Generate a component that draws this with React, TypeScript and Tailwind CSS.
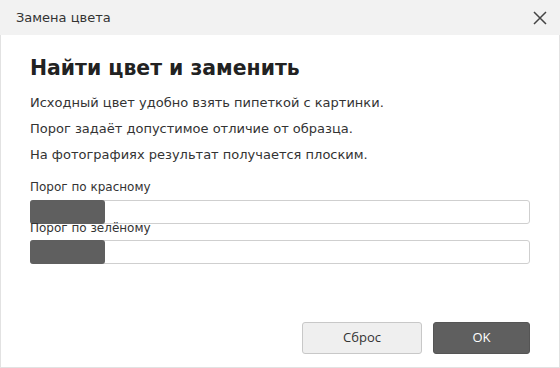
import React from "react";

const sliders = [
  { label: "Порог по красному", value: 75 },
  { label: "Порог по зелёному", value: 75 },
];

export default function App() {
  return (
    <div className="w-[560px] h-[368px] flex flex-col bg-white font-['DejaVu_Sans',sans-serif]">
      {/* Title bar */}
      <div className="h-[35px] shrink-0 flex items-center justify-between bg-[#f2f2f2] pl-4 pr-[13px]">
        <span className="text-[13px] text-[#333]">Замена цвета</span>
        <button className="w-[14px] h-[14px] flex items-center justify-center text-[#444]">
          <svg width="14" height="14" viewBox="0 0 14 14" fill="none" stroke="currentColor" strokeWidth="1.5">
            <path d="M1 1 L13 13 M13 1 L1 13" />
          </svg>
        </button>
      </div>

      {/* Body */}
      <div className="flex-1 flex flex-col border-x border-b border-[#e2e2e2] pl-[29px] pr-[29px] pb-[13px]">
        <h1 className="pt-[19px] text-[20.4px] leading-[28px] font-bold text-[#222]">Найти цвет и заменить</h1>
        <div className="mt-2 text-[13px] leading-[26px] text-[#333]">
          <p>Исходный цвет удобно взять пипеткой с картинки.</p>
          <p>Порог задаёт допустимое отличие от образца.</p>
          <p>На фотографиях результат получается плоским.</p>
        </div>

        <div className="mt-[11px] flex flex-col">
          {sliders.map((s, i) => (
            <div key={s.label} className={i === 0 ? "" : "-mt-1"}>
              <div className="text-[12px] leading-4 text-[#333]">{s.label}</div>
              <div className={`h-6 rounded-[3px] border border-[#cfcfcf] bg-white ${i === 0 ? "mt-[5px]" : "mt-1"}`}>
                <div className="h-6 -m-px rounded-[3px] bg-[#5f5f5f]" style={{ width: s.value }} />
              </div>
            </div>
          ))}
        </div>

        <div className="mt-auto flex justify-end gap-[11px] font-['Open_Sans',sans-serif] text-[13px]">
          <button className="w-[120px] h-8 rounded-[3px] border border-[#c8c8c8] bg-[#efefef] text-[#333]">
            Сброс
          </button>
          <button className="w-[97px] h-8 rounded-[3px] border border-[#555] bg-[#5f5f5f] text-white">
            OK
          </button>
        </div>
      </div>
    </div>
  );
}
